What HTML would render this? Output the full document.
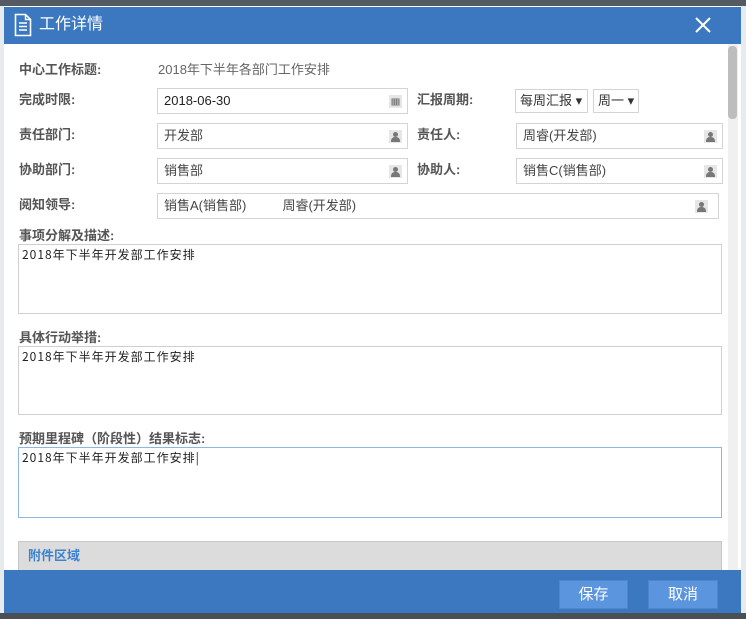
<!DOCTYPE html>
<html><head><meta charset="utf-8"><style>
*{box-sizing:border-box;margin:0;padding:0}
body{width:746px;height:619px;overflow:hidden;background:#e8ebee;font-family:"Liberation Sans","Noto Sans CJK SC",sans-serif;font-size:13px;color:#555;position:relative}
.top{position:absolute;left:0;top:0;width:746px;height:6px;background:#555a60}
.bot{position:absolute;left:0;top:613px;width:746px;height:6px;background:#4a4f55}
.dlg{position:absolute;left:4px;top:6px;width:737px;height:607px;background:#fff}
.hd{position:absolute;left:0;top:1px;width:737px;height:37px;background:#3c78c0;color:#fff;font-size:16px}
.hd .t{position:absolute;left:35px;top:8px;line-height:20px}
.ft{position:absolute;left:0;top:564px;width:737px;height:43px;background:#3c78c0}
.a{position:absolute}
.lb{position:absolute;font-weight:bold;color:#555;font-size:13px;line-height:16px}
.in{position:absolute;border:1px solid #d4d4d4;height:26px;background:#fff;padding-left:6px;line-height:24px;color:#444}
.ic{position:absolute;right:5px;top:6px;width:13px;height:13px;background:#e6e6e6}
.ic:after{content:"";position:absolute;left:4px;top:2px;width:5px;height:5px;border-radius:50%;background:#777}
.ic:before{content:"";position:absolute;left:2px;top:7px;width:9px;height:5px;border-radius:4px 4px 0 0;background:#777}
.ta{position:absolute;left:14px;width:704px;border:1px solid #cfcfcf;padding:2px 3px;font-size:12px;color:#222;line-height:16px;font-family:"Noto Sans CJK SC",sans-serif;letter-spacing:1px}
.sel{position:absolute;border:1px solid #d4d4d4;height:24px;line-height:22px;padding-left:4px;color:#333}
.bt{position:absolute;top:580px;height:29px;background:#5b95dd;border:1px solid #4d86cc;color:#fff;font-size:15px;text-align:center;line-height:27px}
</style></head><body>
<div class="top"></div>
<div class="dlg">
 <div class="hd">
  <svg class="a" style="left:10px;top:6px" width="18" height="24" viewBox="0 0 18 24"><path d="M1.5 1.5h10l5 5v16h-15z" fill="none" stroke="#fff" stroke-width="1.6"/><path d="M11.5 1.5v5h5" fill="none" stroke="#fff" stroke-width="1.4"/><path d="M5 10h8M5 13.5h8M5 17h8" stroke="#fff" stroke-width="1.5"/></svg>
  <span class="t">工作详情</span>
  <svg class="a" style="left:691px;top:10px" width="16" height="16"><path d="M1 1L15 15M15 1L1 15" stroke="#fff" stroke-width="2"/></svg>
 </div>
 <div class="a" style="left:724px;top:38px;width:10px;height:526px;background:#f0f0f0"></div>
 <div class="a" style="left:724px;top:40px;width:9px;height:73px;background:#bdbdbd;border-radius:4px"></div>

 <div class="lb" style="left:15px;top:56px">中心工作标题:</div>
 <div class="a" style="left:154px;top:56px;color:#666;line-height:16px">2018年下半年各部门工作安排</div>

 <div class="lb" style="left:15px;top:86px">完成时限:</div>
 <div class="in" style="left:153px;top:82px;width:251px;color:#222">2018-06-30<svg class="a" style="right:5px;top:6px" width="13" height="13"><rect width="13" height="13" fill="#e6e6e6"/><path d="M3 4h7v6H3zM3 6h7M3 8h7M5.3 4v6M7.6 4v6" fill="none" stroke="#777" stroke-width="1"/></svg></div>
 <div class="lb" style="left:413px;top:86px">汇报周期:</div>
 <div class="sel" style="left:511px;top:83px;width:73px">每周汇报 ▾</div>
 <div class="sel" style="left:589px;top:83px;width:46px">周一 ▾</div>

 <div class="lb" style="left:15px;top:121px">责任部门:</div>
 <div class="in" style="left:153px;top:117px;width:251px">开发部<span class="ic"></span></div>
 <div class="lb" style="left:413px;top:121px">责任人:</div>
 <div class="in" style="left:512px;top:117px;width:207px">周睿(开发部)<span class="ic"></span></div>

 <div class="lb" style="left:15px;top:156px">协助部门:</div>
 <div class="in" style="left:153px;top:152px;width:251px">销售部<span class="ic"></span></div>
 <div class="lb" style="left:413px;top:156px">协助人:</div>
 <div class="in" style="left:512px;top:152px;width:207px">销售C(销售部)<span class="ic"></span></div>

 <div class="lb" style="left:15px;top:191px">阅知领导:</div>
 <div class="in" style="left:153px;top:187px;width:562px">销售A(销售部)&nbsp;&nbsp;&nbsp;&nbsp;&nbsp;&nbsp;&nbsp;&nbsp;&nbsp;&nbsp;周睿(开发部)<span class="ic" style="right:10px"></span></div>

 <div class="lb" style="left:15px;top:222px">事项分解及描述:</div>
 <div class="ta" style="top:238px;height:70px">2018年下半年开发部工作安排</div>
 <div class="lb" style="left:15px;top:324px">具体行动举措:</div>
 <div class="ta" style="top:340px;height:69px">2018年下半年开发部工作安排</div>
 <div class="lb" style="left:15px;top:425px">预期里程碑（阶段性）结果标志:</div>
 <div class="ta" style="top:441px;height:71px;border-color:#8fb4e8">2018年下半年开发部工作安排|</div>

 <div class="a" style="left:14px;top:535px;width:704px;height:29px;background:#dcdcdc;border:1px solid #c8c8c8;border-bottom:none;color:#3c82d0;font-weight:bold;padding:6px 0 0 9px;line-height:16px">附件区域</div>

 <div class="ft"></div>
</div>
<div class="bt" style="left:559px;width:69px">保存</div>
<div class="bt" style="left:648px;width:70px">取消</div>
<div class="bot"></div>
</body></html>
